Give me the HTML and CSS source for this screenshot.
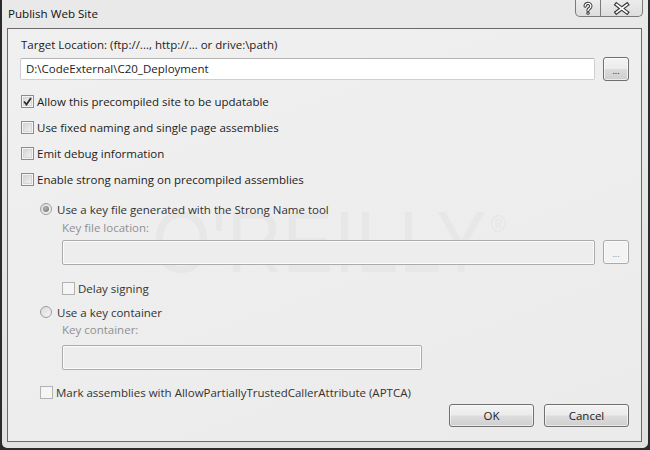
FILE: index.html
```html
<!DOCTYPE html>
<html lang="en">
  <head>
    <meta charset="UTF-8" />
    <meta name="viewport" content="width=device-width, initial-scale=1.0" />
    <title>Publish Web Site</title>
    <link rel="stylesheet" href="styles.css">
  </head>
  <body>
    <div class="window">
      <div class="titlebar">
        <span class="title">Publish Web Site</span>
        <div class="caption-buttons">
          <span class="cap-btn help">
            <svg width="25" height="16" viewBox="0 0 25 16">
              <path d="M9.5 6 A3 2.8 0 1 1 14.2 8.3 Q12.5 9.2 12.5 10.6" fill="none" stroke="#3a3a3a" stroke-width="3.4" stroke-linecap="round" />
              <circle cx="12.5" cy="13.4" r="1.7" fill="#3a3a3a" />
              <path d="M9.5 6 A3 2.8 0 1 1 14.2 8.3 Q12.5 9.2 12.5 10.6" fill="none" stroke="#fff" stroke-width="1.4" stroke-linecap="round" />
              <circle cx="12.5" cy="13.4" r="0.7" fill="#fff" />
            </svg>
          </span>
          <span class="cap-btn close">
            <svg width="41" height="16" viewBox="0 0 41 16">
              <path d="M15.5 4.5 L26 12.5 M26 4.5 L15.5 12.5" stroke="#3a3a3a" stroke-width="4" stroke-linecap="square" />
              <path d="M15.5 4.5 L26 12.5 M26 4.5 L15.5 12.5" stroke="#fff" stroke-width="1.6" stroke-linecap="square" />
            </svg>
          </span>
        </div>
      </div>

      <div class="client">
        <div class="watermark">O'REILLY<span class="reg">®</span></div>

        <div class="label">Target Location: (ftp://..., http://... or drive:\path)</div>
        <div class="path-row">
          <div class="textbox">D:\CodeExternal\C20_Deployment</div>
          <div class="browse">...</div>
        </div>

        <div class="checks">
          <div class="check-row"><span class="checkbox checked">
            <svg width="9" height="9" viewBox="0 0 9 9"><path d="M1 4.5 L3.5 7.5 L8 1" fill="none" stroke="#2e2e2e" stroke-width="1.8" /></svg>
          </span>Allow this precompiled site to be updatable</div>
          <div class="check-row"><span class="checkbox"></span>Use fixed naming and single page assemblies</div>
          <div class="check-row"><span class="checkbox"></span>Emit debug information</div>
          <div class="check-row"><span class="checkbox"></span>Enable strong naming on precompiled assemblies</div>
        </div>

        <div class="strong">
          <div class="radio-row first"><span class="radio selected"></span>Use a key file generated with the Strong Name tool</div>
          <div class="sub-label">Key file location:</div>
          <div class="path-row sub">
            <div class="textbox disabled"></div>
            <div class="browse disabled">...</div>
          </div>
          <div class="check-row delay"><span class="checkbox disabled"></span>Delay signing</div>

          <div class="radio-row second"><span class="radio"></span>Use a key container</div>
          <div class="sub-label">Key container:</div>
          <div class="textbox disabled short"></div>

          <div class="check-row aptca"><span class="checkbox disabled"></span>Mark assemblies with AllowPartiallyTrustedCallerAttribute (APTCA)</div>
        </div>

        <div class="footer">
          <div class="button">OK</div>
          <div class="button">Cancel</div>
        </div>
      </div>
    </div>
  </body>
</html>
```

FILE: styles.css
```css
* {
  margin: 0;
  padding: 0;
  box-sizing: border-box;
}
body {
  width: 650px;
  height: 450px;
  overflow: hidden;
  background: #2b2b2b;
  font-family: "Open Sans", "Noto Sans", sans-serif;
  font-size: 11.5px;
  color: #1c1c1c;
}
.window {
  width: 650px;
  height: 450px;
  display: flex;
  flex-direction: column;
  padding: 0 6px 6px 5px;
  border: 2px solid #2b2b2b;
  border-top: 0;
  border-radius: 0 0 7px 7px;
  background: linear-gradient(#e9e9e9, #e1e1e1);
}

/* title bar */
.titlebar {
  height: 28px;
  display: flex;
  justify-content: space-between;
  align-items: flex-start;
}
.title {
  padding-left: 1px;
  line-height: 27px;
  font-size: 11.6px;
  color: #111;
}
.caption-buttons {
  display: flex;
  margin-right: -1px;
}
.cap-btn {
  height: 17px;
  display: flex;
  border: 1px solid #7a7a7a;
  border-top: 0;
  background: linear-gradient(#ececec, #dddddd);
}
.cap-btn.help {
  width: 26px;
  border-radius: 0 0 0 5px;
}
.cap-btn.close {
  width: 42px;
  border-left: 0;
  border-radius: 0 0 5px 0;
}

/* client area */
.client {
  flex: 1;
  position: relative;
  z-index: 0;
  display: flex;
  flex-direction: column;
  padding: 0 12px;
  border: 1px solid #6a6a6a;
  background: linear-gradient(160deg, #f0f0f0, #ebebeb);
}
.watermark {
  position: absolute;
  z-index: -1;
  left: 144px;
  top: 163px;
  font-family: "Liberation Sans", sans-serif;
  font-size: 88px;
  line-height: 64px;
  height: 64px;
  letter-spacing: 1px;
  color: #e7e7e7;
  white-space: nowrap;
  transform: scaleX(0.86);
  transform-origin: left top;
}
.watermark .reg {
  font-size: 24px;
  vertical-align: 40px;
  margin-left: 4px;
}
.label {
  margin-top: 8px;
  height: 16px;
  line-height: 16px;
  padding-left: 1px;
}
.path-row {
  margin-top: 4px;
  height: 24px;
  display: flex;
  align-items: center;
  gap: 8px;
}
.textbox {
  flex: 1;
  height: 22px;
  line-height: 20px;
  padding-left: 5px;
  background: #fff;
  border: 1px solid #cfcfcf;
  border-top-color: #b4b4b4;
  border-radius: 2px;
}
.textbox.disabled {
  height: 25px;
  background: #ededed;
  border: 1px solid #ababab;
  box-shadow: inset 0 0 0 1px #fbfbfb;
}
.textbox.short {
  flex: none;
  width: 360px;
  margin-top: 7px;
  margin-left: 22px;
}
.browse {
  width: 26px;
  height: 24px;
  display: flex;
  justify-content: center;
  align-items: flex-end;
  padding-bottom: 5px;
  font-size: 9px;
  line-height: 9px;
  border: 1px solid #6f6f6f;
  border-radius: 3px;
  background: linear-gradient(#f3f3f3 0%, #ebebeb 48%, #dcdcdc 52%, #cdcdcd 100%);
  box-shadow: inset 0 0 0 1px rgba(255, 255, 255, 0.6);
}
.browse.disabled {
  color: #8a8a8a;
  border-color: #a9a9a9;
  background: #f3f3f3;
}

/* check boxes and radios */
.checks {
  margin-top: 7px;
}
.check-row,
.radio-row {
  display: flex;
  align-items: center;
  height: 26px;
  padding-left: 1px;
}
.checkbox {
  width: 13px;
  height: 13px;
  margin-right: 3px;
  display: flex;
  justify-content: center;
  align-items: center;
  border: 1px solid #8c8c8c;
  background: linear-gradient(135deg, #cfcfcf, #f6f6f6);
  box-shadow: inset 0 0 0 1px #f4f4f4, inset 0 0 0 2px #d6d6d6;
}
.checkbox.checked {
  background: linear-gradient(135deg, #d6d6d6, #f8f8f8);
}
.checkbox.disabled {
  border-color: #b2b2b2;
  background: #f5f5f5;
  box-shadow: none;
}
.strong {
  padding-left: 20px;
  display: flex;
  flex-direction: column;
}
.strong .radio-row,
.strong .check-row {
  height: 18px;
  padding-left: 0;
  color: #333;
}
.radio-row.first {
  margin-top: 8px;
}
.radio-row.second {
  margin-top: 6px;
}
.radio {
  width: 12px;
  height: 12px;
  margin-right: 5px;
  border-radius: 50%;
  display: flex;
  justify-content: center;
  align-items: center;
  border: 1px solid #9c9c9c;
  background: linear-gradient(135deg, #d9d9d9, #f7f7f7);
}
.radio.selected::after {
  content: "";
  width: 6px;
  height: 6px;
  border-radius: 50%;
  background: radial-gradient(circle at 40% 35%, #b5b5b5, #6c6c6c);
}
.sub-label {
  height: 16px;
  line-height: 16px;
  margin-top: 2px;
  padding-left: 22px;
  color: #909090;
}
.radio-row.second + .sub-label {
  margin-top: 1px;
}
.path-row.sub {
  margin-top: 3px;
  height: 26px;
  padding-left: 22px;
}
.check-row.delay {
  margin-top: 14px;
  padding-left: 22px;
}
.check-row.aptca {
  margin-top: 13px;
}

/* dialog buttons */
.footer {
  margin-top: 3px;
  display: flex;
  justify-content: flex-end;
  gap: 10px;
}
.button {
  width: 85px;
  height: 23px;
  line-height: 21px;
  text-align: center;
  border: 1px solid #707070;
  border-radius: 3px;
  background: linear-gradient(#f3f3f3 0%, #ebebeb 48%, #dddddd 52%, #cfcfcf 100%);
  box-shadow: inset 0 0 0 1px rgba(255, 255, 255, 0.55);
}
```
